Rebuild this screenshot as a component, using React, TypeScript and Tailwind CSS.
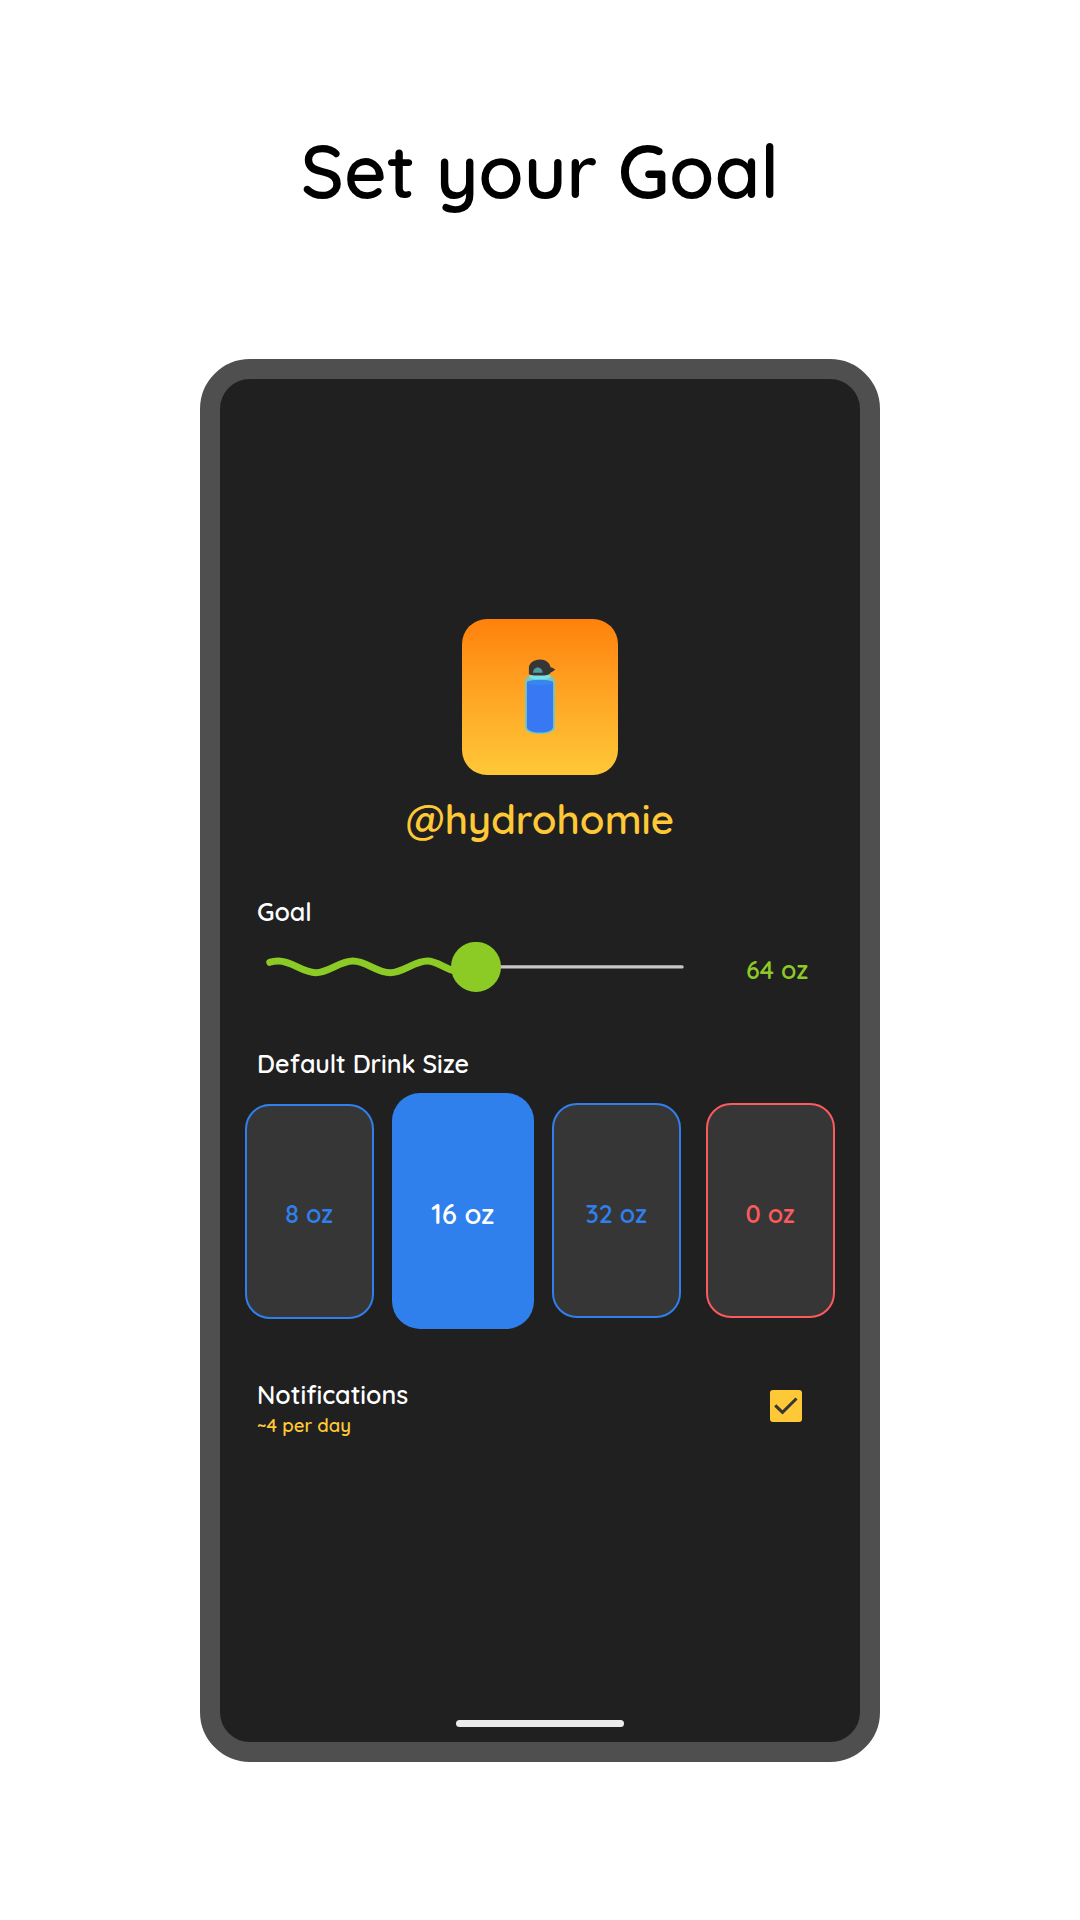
import React from "react";

function Bottle() {
  return (
    <svg width="32" height="78" viewBox="0 0 32 78" className="block" aria-hidden="true">
      <path d="M5.500 17.500h21c2.400 0 4.500 2.500 4.500 5v46c0 4-6 6.500-15 6.500S1 72.500 1 68.500V22c0-2.500 2-4.500 4.500-4.500z" fill="#79c6bd" />
      <ellipse cx="15.900" cy="17.500" rx="10.800" ry="3.200" fill="#78e0e8" />
      <path d="M2.900 23h26.200v45c0 3.200-5.200 5.600-13.100 5.600S2.900 71.200 2.900 68z" fill="#3878f2" />
      <ellipse cx="16" cy="23.500" rx="13.100" ry="2.700" fill="#3387ee" />
      <path d="M4.900 15V9C4.900 4 9.500 .4 16.200.4 21.500 .4 25.800 3.500 26.500 8.200c1.600 0 3.200 1 4.700 2.300-1.300 1.400-2.900 2.500-4.500 3-.8 2.300-5 3.100-10.500 3.100-6 0-10.300-.5-11.300-1.600z" fill="#363637" />
      <path d="M9 13.700c0-3 2-5.300 4.800-5.300s4.800 2.300 4.800 5.300z" fill="#509ca1" />
    </svg>
  );
}

function GoalSlider() {
  return (
    <svg width="420" height="50" viewBox="266 942 420 50" className="block" role="img" aria-label="Goal slider">
      <path d="M500 966.900H682" stroke="#cac6c8" strokeWidth="3.400" strokeLinecap="round" />
      <path
        d="M269.800 962.300C272 961.400 275 961 278.500 961C292 961 302.500 972.700 315.700 972.700C329 972.700 339.500 961 352.900 961C366.200 961 376.800 972.700 390.200 972.700C403.500 972.700 414 961 427.400 961C438 961 446 970 456 971"
        fill="none"
        stroke="#8cca26"
        strokeWidth="7"
        strokeLinecap="round"
      />
      <circle cx="476" cy="966.900" r="25" fill="#8cca26" />
    </svg>
  );
}

const sizes = [
  {
    label: "8 oz",
    box: "ml-[25px] h-[215px] w-[128.500px] rounded-[25px] border-2 border-[#2f80ed] bg-[#363636] text-[#2f80ed]",
    text: "pt-[5px] text-[25px]",
  },
  {
    label: "16 oz",
    box: "ml-[18.500px] h-[236px] w-[141.500px] rounded-[28px] bg-[#2f80ed] text-white",
    text: "pt-[6px] text-[27.5px]",
  },
  {
    label: "32 oz",
    box: "ml-[18.500px] -mt-px h-[215px] w-[128.500px] rounded-[25px] border-2 border-[#2f80ed] bg-[#363636] text-[#2f80ed]",
    text: "pt-[6px] text-[25px]",
  },
  {
    label: "0 oz",
    box: "ml-[25.500px] -mt-px h-[215px] w-[128.500px] rounded-[25px] border-2 border-[#fb5a5e] bg-[#363636] text-[#fb5a5e]",
    text: "pt-[6px] text-[25px]",
  },
];

export default function App() {
  return (
    <main className="flex h-[1920px] w-[1080px] flex-col items-center overflow-hidden bg-white font-['Quicksand','Lato',sans-serif] font-semibold whitespace-nowrap">
      <h1 className="mt-[120px] h-[100px] text-[73.7px] leading-[100px] font-semibold text-black">Set your Goal</h1>
      <section className="mt-[139px] flex h-[1403px] w-[680px] flex-col rounded-[50px] border-[20px] border-[#4f4f4f] bg-[#202020] text-white">
        <div className="mt-[240px] flex h-[156px] w-[156px] items-start justify-center self-center rounded-[25px] bg-linear-to-b from-[#ff810a] to-[#ffc837] pt-[40px]">
          <Bottle />
        </div>
        <div className="mt-[19px] h-[50px] self-center text-[40.2px] leading-[50px] text-[#ffc837]">@hydrohomie</div>

        <div className="mt-[53px] ml-[37px] h-[30px] text-[25px] leading-[30px]">Goal</div>
        <div className="mt-[15px] ml-[46px] flex h-[50px]">
          <GoalSlider />
          <span className="mt-[13px] ml-[60px] text-[25px] leading-[30px] text-[#8cca26]">64 oz</span>
        </div>

        <div className="mt-[57px] ml-[37px] h-[30px] text-[25px] leading-[30px]">Default Drink Size</div>
        <div className="mt-[14px] flex h-[236px] items-center">
          {sizes.map((s) => (
            <button key={s.label} className={`flex shrink-0 items-center justify-center ${s.box}`}>
              <span className={`leading-[30px] ${s.text}`}>{s.label}</span>
            </button>
          ))}
        </div>

        <div className="mt-[51px] flex h-[60px] justify-between pr-[58px] pl-[37px]">
          <div>
            <div className="h-[30px] text-[25px] leading-[30px]">Notifications</div>
            <div className="mt-[3px] h-[24px] text-[18.500px] leading-[24px] text-[#ffc837]">~4 per day</div>
          </div>
          <div className="mt-[10px] h-[32px] w-[32px] rounded-[3px] bg-[#ffc837]">
            <svg width="32" height="32" viewBox="0 0 32 32" className="block" aria-hidden="true">
              <path d="M5.200 15.300L12.500 22.300L26.500 8.500" fill="none" stroke="#363636" strokeWidth="3" />
            </svg>
          </div>
        </div>
        <div className="mt-auto mb-[15px] h-[7px] w-[168px] self-center rounded-full bg-[#ebebeb]" />
      </section>
    </main>
  );
}
